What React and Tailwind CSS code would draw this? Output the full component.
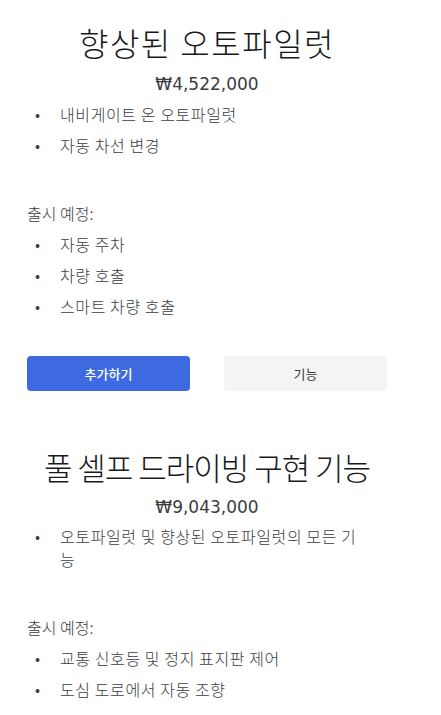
import React from 'react';

const font = { fontFamily: '"Noto Sans CJK KR", "Noto Sans", sans-serif' };

const sections = [
  {
    title: '향상된 오토파일럿',
    titleClass: 'text-[32px] tracking-[1.5px]',
    priceClass: 'mt-[9px]',
    listClass: 'mt-[8px]',
    price: '₩4,522,000',
    features: ['내비게이트 온 오토파일럿', '자동 차선 변경'],
    upcoming: ['자동 주차', '차량 호출', '스마트 차량 호출'],
  },
  {
    title: '풀 셀프 드라이빙 구현 기능',
    titleClass: 'text-[31px] tracking-[-1px]',
    priceClass: 'mt-[7px]',
    listClass: 'mt-[7px]',
    price: '₩9,043,000',
    features: ['오토파일럿 및 향상된 오토파일럿의 모든 기능'],
    upcoming: ['교통 신호등 및 정지 표지판 제어', '도심 도로에서 자동 조향'],
  },
];

const BulletList = ({ items }) => (
  <ul className="flex flex-col gap-[8px]">
    {items.map((item) => (
      <li key={item} className="flex text-[16px] leading-[23px] tracking-[0.6px] font-light text-[#393c41]">
        <span className="w-[33px] shrink-0 pl-[8px] text-[#393c41]">•</span>
        <span className="pr-[20px]">{item}</span>
      </li>
    ))}
  </ul>
);

const Package = ({ section }) => (
  <div className="flex flex-col">
    <h2
      className={`whitespace-nowrap text-center leading-[44px] font-light text-[#171a20] ${section.titleClass}`}
    >
      {section.title}
    </h2>
    <div
      className={`text-center text-[17px] leading-[22px] text-[#393c41] ${section.priceClass}`}
      style={{ fontFamily: '"DejaVu Sans", sans-serif' }}
    >
      {section.price}
    </div>
    <div className={section.listClass}>
      <BulletList items={section.features} />
    </div>
    <div className="mt-[45px] text-[16px] leading-[23px] font-light text-[#393c41]">출시 예정:</div>
    <div className="mt-[8px]">
      <BulletList items={section.upcoming} />
    </div>
  </div>
);

export default function App() {
  return (
    <div className="min-h-screen bg-white" style={font}>
      <div className="w-[360px] ml-[27px] pt-[20px]">
        <Package section={sections[0]} />
        <div className="mt-[38px] flex gap-[34px]">
          <button className="h-[35px] flex-1 rounded-[4px] bg-[#3e6ae1] text-[13px] font-medium text-white">
            추가하기
          </button>
          <button className="h-[35px] flex-1 rounded-[4px] bg-[#f4f4f4] text-[13px] text-[#393c41]">
            기능
          </button>
        </div>
        <div className="mt-[54px]">
          <Package section={sections[1]} />
        </div>
      </div>
    </div>
  );
}
